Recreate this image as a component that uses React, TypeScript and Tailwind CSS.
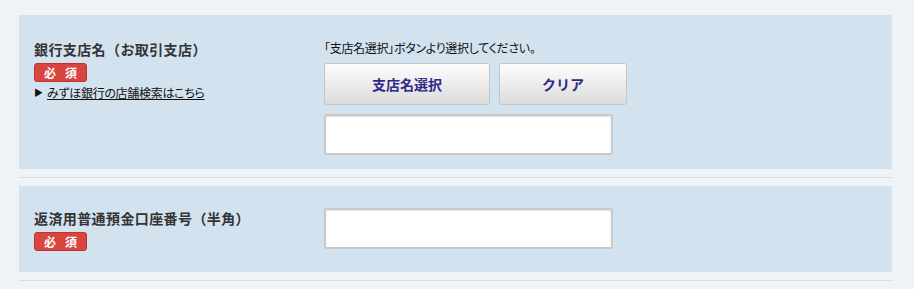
import React from "react";

const jp = { fontFamily: '"Noto Sans CJK JP", "Noto Sans", sans-serif' };

function Badge() {
  return (
    <div className="mt-[4px] flex h-[19px] w-[53px] items-center justify-center gap-[9px] rounded-[3px] border border-[#c0342f] bg-[#d9463f] text-[12px] font-bold leading-none text-white">
      <span>必</span>
      <span>須</span>
    </div>
  );
}

function TextInput() {
  return (
    <div className="h-[41px] w-[289px] rounded-[2px] border-2 border-[#c9c9c9] bg-white shadow-[inset_0_1px_2px_rgba(0,0,0,0.12)]" />
  );
}

function Divider() {
  return <div className="my-[8px] ml-[19px] w-[873px] border-t border-dotted border-[#c4c8cc]" />;
}

export default function App() {
  return (
    <div className="min-h-[289px] w-[914px] bg-[#eef3f7] pt-[15px]" style={jp}>
      <div className="ml-[19px] flex h-[154px] w-[873px] bg-[#d2e2ef] pl-[15px]">
        <div className="w-[290px] pt-[24px]">
          <div className="text-[14px] font-bold leading-[20px] text-[#333] tracking-[0.4px]">銀行支店名（お取引支店）</div>
          <Badge />
          <div className="mt-[3px] flex items-center text-[12px] leading-[16px] text-[#111]">
            <span className="mr-[4px] text-[9px]">▶</span>
            <a className="underline tracking-[-0.3px] [font-feature-settings:'palt']">みずほ銀行の店舗検索はこちら</a>
          </div>
        </div>
        <div className="pt-[24px]">
          <div className="text-[12px] leading-[18px] text-[#111] tracking-[-0.3px] [font-feature-settings:'palt']">「支店名選択」ボタンより選択してください。</div>
          <div className="mt-[6px] flex gap-[9px]">
            <div className="flex h-[42px] w-[166px] items-center justify-center rounded-[3px] border border-[#c6c6c6] bg-gradient-to-b from-[#fdfdfd] to-[#dcdcdc] text-[14px] font-bold text-[#2d2a87]">
              支店名選択
            </div>
            <div className="flex h-[42px] w-[128px] items-center justify-center rounded-[3px] border border-[#c6c6c6] bg-gradient-to-b from-[#fdfdfd] to-[#dcdcdc] text-[14px] font-bold text-[#2d2a87]">
              クリア
            </div>
          </div>
          <div className="mt-[9px]">
            <TextInput />
          </div>
        </div>
      </div>
      <Divider />
      <div className="ml-[19px] flex h-[86px] w-[873px] bg-[#d2e2ef] pl-[15px]">
        <div className="w-[290px] pt-[22px]">
          <div className="text-[14px] font-bold leading-[20px] text-[#333] tracking-[0.4px]">返済用普通預金口座番号（半角）</div>
          <Badge />
        </div>
        <div className="pt-[22px]">
          <TextInput />
        </div>
      </div>
      <Divider />
    </div>
  );
}
